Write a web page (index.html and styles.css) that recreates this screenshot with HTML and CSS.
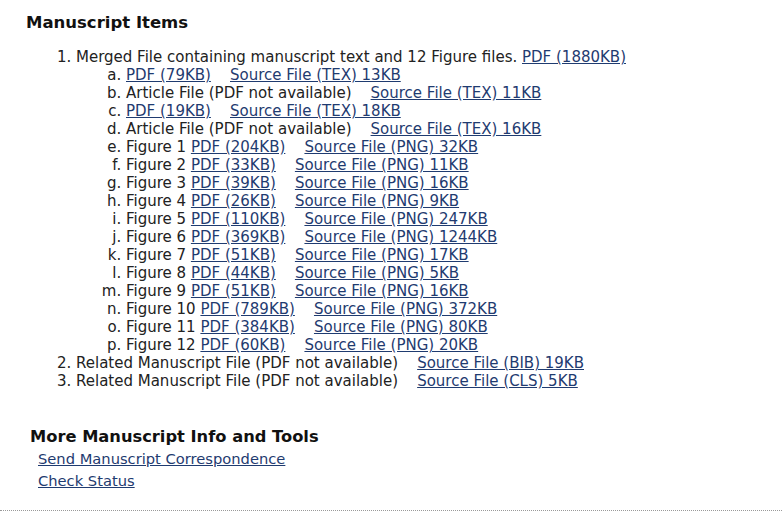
FILE: index.html
```html
<!DOCTYPE html>
<html lang="en">
<head>
  <meta charset="UTF-8">
  <link rel="stylesheet" href="styles.css">
  <title>Manuscript Items</title>
</head>
<body>

<div id="items">
  <h2>Manuscript Items</h2>
  <ol class="files">
    <li>Merged File containing manuscript text and 12 Figure files. <a href="#">PDF (1880KB)</a>
      <ol class="parts">
        <li><a href="#">PDF (79KB)</a>&nbsp;&nbsp;&nbsp; <a href="#">Source File (TEX) 13KB</a></li>
        <li>Article File (PDF not available)&nbsp;&nbsp;&nbsp; <a href="#">Source File (TEX) 11KB</a></li>
        <li><a href="#">PDF (19KB)</a>&nbsp;&nbsp;&nbsp; <a href="#">Source File (TEX) 18KB</a></li>
        <li>Article File (PDF not available)&nbsp;&nbsp;&nbsp; <a href="#">Source File (TEX) 16KB</a></li>
        <li>Figure 1 <a href="#">PDF (204KB)</a>&nbsp;&nbsp;&nbsp; <a href="#">Source File (PNG) 32KB</a></li>
        <li>Figure 2 <a href="#">PDF (33KB)</a>&nbsp;&nbsp;&nbsp; <a href="#">Source File (PNG) 11KB</a></li>
        <li>Figure 3 <a href="#">PDF (39KB)</a>&nbsp;&nbsp;&nbsp; <a href="#">Source File (PNG) 16KB</a></li>
        <li>Figure 4 <a href="#">PDF (26KB)</a>&nbsp;&nbsp;&nbsp; <a href="#">Source File (PNG) 9KB</a></li>
        <li>Figure 5 <a href="#">PDF (110KB)</a>&nbsp;&nbsp;&nbsp; <a href="#">Source File (PNG) 247KB</a></li>
        <li>Figure 6 <a href="#">PDF (369KB)</a>&nbsp;&nbsp;&nbsp; <a href="#">Source File (PNG) 1244KB</a></li>
        <li>Figure 7 <a href="#">PDF (51KB)</a>&nbsp;&nbsp;&nbsp; <a href="#">Source File (PNG) 17KB</a></li>
        <li>Figure 8 <a href="#">PDF (44KB)</a>&nbsp;&nbsp;&nbsp; <a href="#">Source File (PNG) 5KB</a></li>
        <li>Figure 9 <a href="#">PDF (51KB)</a>&nbsp;&nbsp;&nbsp; <a href="#">Source File (PNG) 16KB</a></li>
        <li>Figure 10 <a href="#">PDF (789KB)</a>&nbsp;&nbsp;&nbsp; <a href="#">Source File (PNG) 372KB</a></li>
        <li>Figure 11 <a href="#">PDF (384KB)</a>&nbsp;&nbsp;&nbsp; <a href="#">Source File (PNG) 80KB</a></li>
        <li>Figure 12 <a href="#">PDF (60KB)</a>&nbsp;&nbsp;&nbsp; <a href="#">Source File (PNG) 20KB</a></li>
      </ol>
    </li>
    <li>Related Manuscript File (PDF not available)&nbsp;&nbsp;&nbsp; <a href="#">Source File (BIB) 19KB</a></li>
    <li>Related Manuscript File (PDF not available)&nbsp;&nbsp;&nbsp; <a href="#">Source File (CLS) 5KB</a></li>
  </ol>
</div>

<div id="tools">
  <h3>More Manuscript Info and Tools</h3>
  <div class="tool-links">
    <a href="#">Send Manuscript Correspondence</a>
    <a href="#">Check Status</a>
  </div>
</div>

<div class="footer-rule"></div>

</body>
</html>
```

FILE: styles.css
```css
body {
  margin: 0;
  font-family: 'DejaVu Sans', Verdana, sans-serif;
  font-size: 15px;
  color: #222222;
  background-color: #ffffff;
}

a {
  color: #1f3b70;
}

#items {
  padding: 13px 0 0 26px;
}

#items h2 {
  margin: 0 0 15px 0;
  font-size: 16.5px;
  line-height: 20px;
  font-weight: bold;
  color: #111111;
}

.files {
  margin: 0;
  padding-left: 50px;
  line-height: 18px;
}

.parts {
  margin: 0;
  padding-left: 50px;
  list-style-type: lower-alpha;
}

#tools {
  padding: 36px 0 0 30px;
  height: 84px;
}

#tools h3 {
  margin: 0;
  font-size: 16.3px;
  font-weight: bold;
  color: #111111;
  line-height: 22px;
}

.tool-links {
  display: flex;
  flex-direction: column;
  align-items: flex-start;
  padding-left: 8px;
  font-size: 14.7px;
  line-height: 22px;
}

.footer-rule {
  border-top: 1px dotted #999999;
}
```
